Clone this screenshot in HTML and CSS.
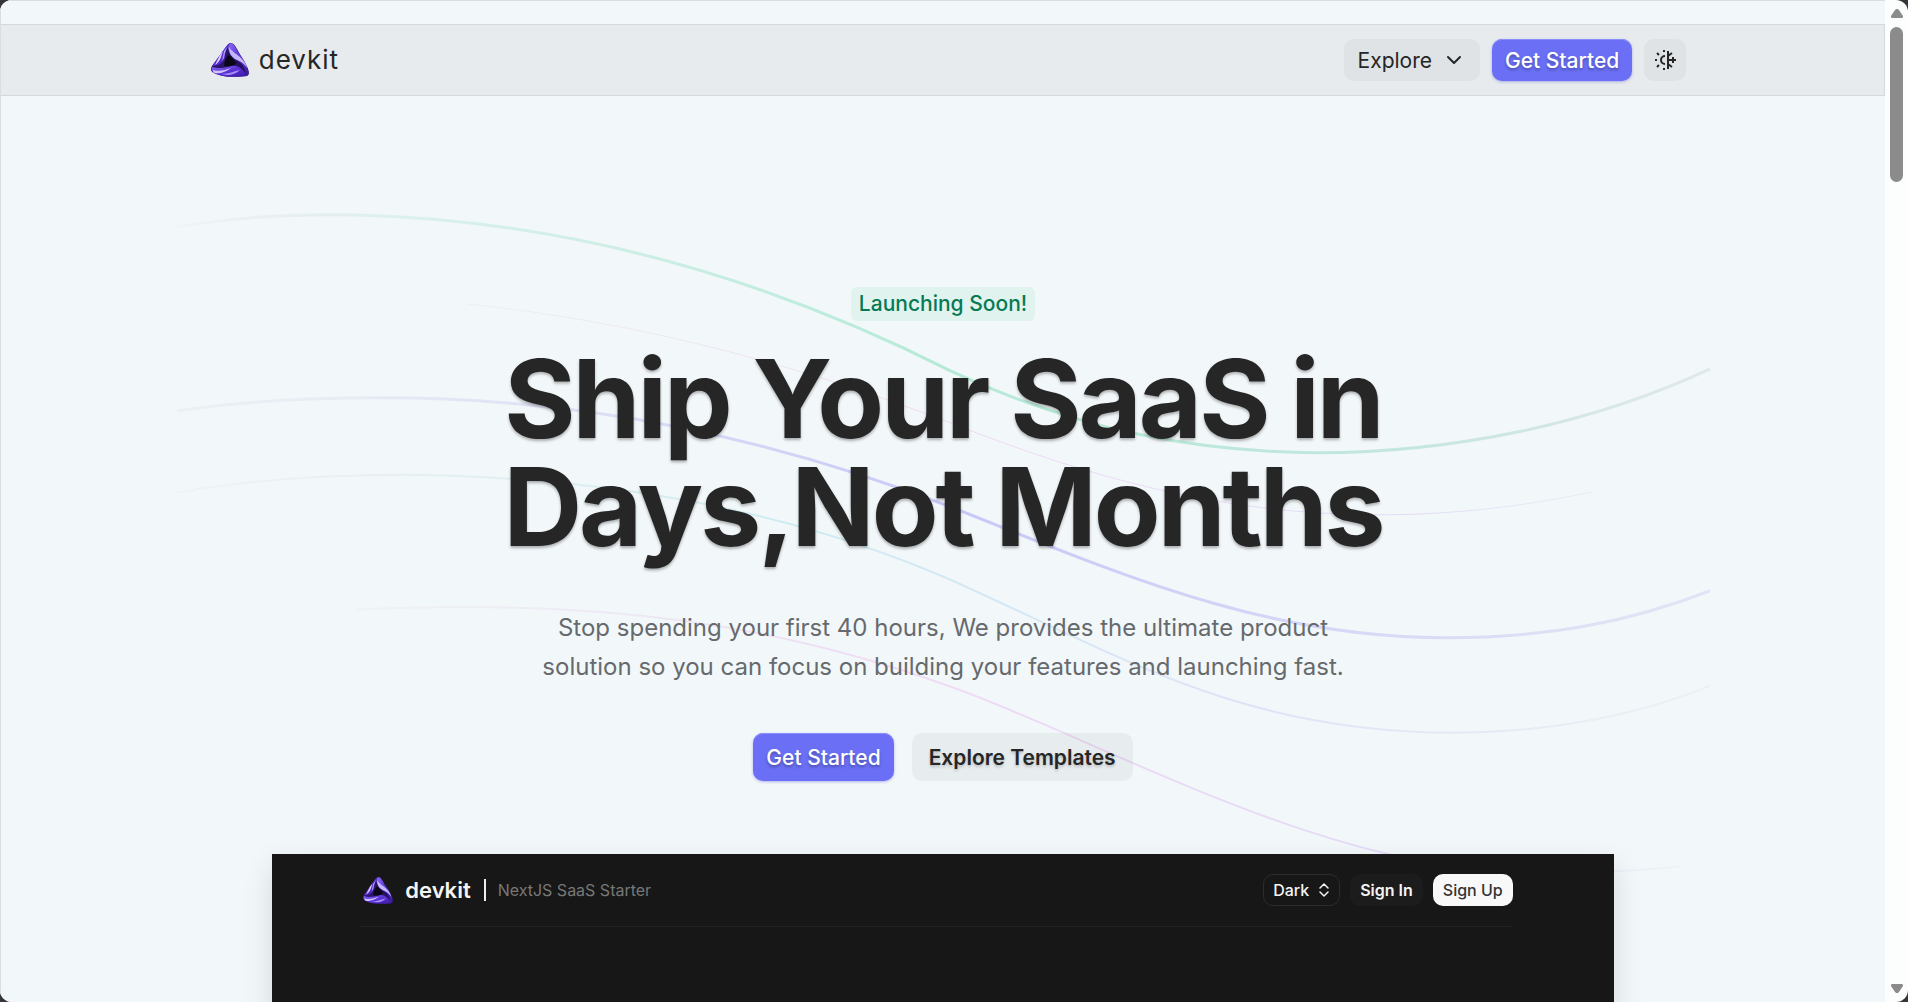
FILE: index.html
```html
<!DOCTYPE html>
<html lang="en">
<head>
    <meta charset="UTF-8">
    <meta name="viewport" content="width=device-width, initial-scale=1.0">
    <title>devkit</title>
    <link rel="stylesheet" href="styles.css">
</head>
<body>
    <svg class="defs" width="0" height="0" aria-hidden="true">
        <defs>
            <linearGradient id="purple" x1="0" y1="0" x2="1" y2="1">
                <stop offset="0" stop-color="#8a6df0"/>
                <stop offset="0.5" stop-color="#5a2fd8"/>
                <stop offset="1" stop-color="#3a1a9c"/>
            </linearGradient>
            <symbol id="logo" viewBox="0 0 38 34">
                <path fill="#2a1668" d="M20 0c2 0 4 2 6 6l10 18c2 4 3 8 0 9-8 1-24 2-33-3-3-1-4-4-2-7L15 4c2-3 3-4 5-4z"/>
                <path fill="url(#purple)" d="M20 0c3 1 5 5 7 9 4 5 7 9 10 17 1 4 0 6-2 7 0-8-5-12-10-15-4-3-7-8-8-13 1-3 1-5 3-5z"/>
                <path fill="#c3b5fa" d="M18 4c3 5 8 7 12 11 3 3 5 6 6 10-4-6-8-7-12-9-4-3-6-6-6-12z"/>
                <path fill="#24105e" d="M17 6c0 5 4 9 8 11 5 2 8 6 9 12-4-6-8-8-12-10-4-3-6-8-5-13z"/>
                <path fill="url(#purple)" d="M36 33c-8 1-24 2-33-3-2-1-3-4-2-6 6 2 13 1 19-1 7-1 12 3 16 10z"/>
                <path fill="#cfc4ff" d="M2 27c6 2 12 0 18-2-5 4-11 6-16 5-2 0-2-2-2-3z"/>
                <path fill="#a58cf7" d="M10 31c8 0 13-3 19-4-4 4-9 5-13 5z"/>
                <path fill="url(#purple)" d="M1 23 14 5c2-3 4-5 6-5-5 5-6 10-6 14-1 6-7 9-13 9z"/>
                <path fill="#d9d0ff" d="M12 8c-2 5-2 10-8 14l5-10z"/>
                <path fill="#b09af8" d="M18 2c-4 5-4 9-5 13l-2 3 2-10z"/>
                <path fill="#0b0716" d="M17 12c4 2 7 4 8 9-3 2-8 3-12 2 0-4 2-8 4-11z"/>
            </symbol>
        </defs>
    </svg>

    <div class="window">
        <div class="page">
            <header class="navbar">
                <nav class="container">
                    <a class="brand" href="#">
                        <svg class="brand-logo" aria-hidden="true"><use href="#logo"/></svg>
                        <span>devkit</span>
                    </a>
                    <div class="nav-actions">
                        <button type="button" class="btn btn-explore">
                            Explore
                            <svg width="16" height="16" viewBox="0 0 16 16" fill="none" stroke="currentColor" stroke-width="2" stroke-linecap="round" stroke-linejoin="round" aria-hidden="true"><path d="M2 5l6 6 6-6"/></svg>
                        </button>
                        <a class="btn btn-primary" href="#">Get Started</a>
                        <button type="button" class="btn btn-icon" aria-label="Toggle theme">
                            <svg width="22" height="22" viewBox="0 0 22 22" fill="none" stroke="currentColor" stroke-width="2" aria-hidden="true">
                                <path d="M11 7a4 4 0 0 0 0 8"/>
                                <path d="M10 1v2M10 19v2M1 11h2M3 4l2 2M3 18l2-2"/>
                                <path d="M14 2v18M14 11h8M19 8v6M14 7l4-3M14 15l4 3"/>
                            </svg>
                        </button>
                    </div>
                </nav>
            </header>

            <main class="hero">
                <!-- Background waves -->
                <svg class="waves" viewBox="0 0 1885 906" fill="none" aria-hidden="true">
                    <defs>
                        <linearGradient id="waveGreen" gradientUnits="userSpaceOnUse" x1="180" y1="0" x2="1710" y2="0">
                            <stop offset="0" stop-color="#d8dde0" stop-opacity="0.1"/>
                            <stop offset="0.15" stop-color="#d5efe8" stop-opacity="0.8"/>
                            <stop offset="0.5" stop-color="#b4ead6"/>
                            <stop offset="0.8" stop-color="#c3e6dd"/>
                            <stop offset="1" stop-color="#d8e2e2" stop-opacity="0.7"/>
                        </linearGradient>
                        <linearGradient id="waveIndigo" gradientUnits="userSpaceOnUse" x1="180" y1="0" x2="1710" y2="0">
                            <stop offset="0" stop-color="#dfe2ea" stop-opacity="0.3"/>
                            <stop offset="0.5" stop-color="#c6c7f8"/>
                            <stop offset="1" stop-color="#d8d8f2" stop-opacity="0.6"/>
                        </linearGradient>
                        <linearGradient id="waveTeal" gradientUnits="userSpaceOnUse" x1="180" y1="0" x2="1710" y2="0">
                            <stop offset="0" stop-color="#dfe4e8" stop-opacity="0.2"/>
                            <stop offset="0.4" stop-color="#cdecf0"/>
                            <stop offset="0.7" stop-color="#dfe2f7"/>
                            <stop offset="1" stop-color="#e4e6ee" stop-opacity="0.4"/>
                        </linearGradient>
                        <linearGradient id="wavePink" gradientUnits="userSpaceOnUse" x1="350" y1="0" x2="1680" y2="0">
                            <stop offset="0" stop-color="#e4e0ea" stop-opacity="0.2"/>
                            <stop offset="0.45" stop-color="#f0d9f4"/>
                            <stop offset="0.8" stop-color="#e2dcf8"/>
                            <stop offset="1" stop-color="#e2e2ec" stop-opacity="0.2"/>
                        </linearGradient>
                    </defs>
                    <g transform="translate(0 -96)">
                        <path stroke="url(#waveGreen)" stroke-width="3" d="M176 227C240 216 300 214 354 215C560 220 760 275 950 371C1080 432 1200 452 1317 453C1450 453 1590 425 1710 369"/>
                        <path stroke="url(#wavePink)" stroke-width="1" d="M466 304C640 322 800 366 950 423C1090 478 1220 515 1380 515C1460 515 1530 505 1593 492"/>
                        <path stroke="url(#waveIndigo)" stroke-width="3" d="M176 411C250 400 320 398 380 398C590 398 775 440 950 507C1110 570 1260 638 1445 638C1550 638 1630 622 1710 591"/>
                        <path stroke="url(#waveTeal)" stroke-width="2" d="M176 493C260 478 340 475 405 475C620 477 800 515 950 580C1120 656 1240 733 1455 733C1550 733 1640 715 1710 686"/>
                        <path stroke="url(#wavePink)" stroke-width="2" d="M354 610C600 598 780 625 950 687C1100 740 1320 870 1530 874C1590 874 1640 871 1680 867"/>
                    </g>
                </svg>

                <div class="hero-content">
                    <span class="badge">Launching Soon!</span>
                    <h1>Ship Your SaaS in<br>Days,Not Months</h1>
                    <p>Stop spending your first 40 hours, We provides the ultimate product solution so you can focus on building your features and launching fast.</p>
                    <div class="hero-actions">
                        <a class="btn btn-primary btn-lg" href="#">Get Started</a>
                        <a class="btn btn-secondary btn-lg" href="#">Explore Templates</a>
                    </div>
                </div>

                <!-- Product preview -->
                <section class="preview">
                    <div class="preview-bar">
                        <a class="preview-brand" href="#">
                            <svg class="preview-logo" aria-hidden="true"><use href="#logo"/></svg>
                            <span>devkit</span>
                        </a>
                        <span class="preview-title">NextJS SaaS Starter</span>
                        <div class="preview-actions">
                            <button type="button" class="preview-btn theme-select">
                                Dark
                                <svg width="12" height="16" viewBox="0 0 12 16" fill="none" stroke="currentColor" stroke-width="1.5" stroke-linecap="round" stroke-linejoin="round" aria-hidden="true"><path d="M2 6l4-4 4 4M2 10l4 4 4-4"/></svg>
                            </button>
                            <button type="button" class="preview-btn sign-in">Sign In</button>
                            <button type="button" class="preview-btn sign-up">Sign Up</button>
                        </div>
                    </div>
                </section>
            </main>
        </div>

        <!-- Scrollbar -->
        <div class="scrollbar" aria-hidden="true">
            <svg width="12" height="9" viewBox="0 0 12 9"><path fill="#8b8b8b" d="M6 0c1 0 1 0 2 1l4 6c0 1 0 2-1 2H1C0 9 0 8 0 7l4-6c1-1 1-1 2-1z"/></svg>
            <div class="thumb"></div>
            <svg width="12" height="9" viewBox="0 0 12 9"><path fill="#8b8b8b" d="M6 9c1 0 1 0 2-1l4-6c0-1 0-2-1-2H1C0 0 0 1 0 2l4 6c1 1 1 1 2 1z"/></svg>
        </div>
    </div>
</body>
</html>
```
FILE: styles.css
```css
* {
    box-sizing: border-box;
}

body {
    margin: 0;
    font-family: Inter, "Liberation Sans", sans-serif;
    color: #262626;
    background-color: #35353b;
}

a {
    color: inherit;
    text-decoration: none;
}

button {
    font: inherit;
    color: inherit;
    border: none;
    cursor: pointer;
}

.defs {
    position: absolute;
}

.window {
    display: flex;
    height: 100vh;
    overflow: hidden;
    border-radius: 12px;
    background-color: #fcfdfd;
}

.page {
    flex: 1;
    overflow: hidden;
    padding-top: 23px;
    background-color: #f2f7fa;
    border-top: 1px solid #d9dee1;
    border-left: 1px solid #d9dee1;
}

/* Navbar */
.navbar {
    background-color: #e7ebed;
    border: 1px solid #d3d8db;
    border-left: none;
}

.container {
    display: flex;
    align-items: center;
    justify-content: space-between;
    width: 79%;
    height: 70px;
    margin: 0 auto;
    padding-left: 12px;
}

.brand {
    display: flex;
    align-items: center;
    gap: 10px;
    font-size: 26px;
    line-height: 30px;
    letter-spacing: 1px;
}

.brand-logo {
    width: 38px;
    height: 34px;
}

.nav-actions {
    display: flex;
    gap: 12px;
}

.btn {
    display: flex;
    align-items: center;
    justify-content: center;
    height: 42px;
    padding: 0 13px;
    border-radius: 10px;
    font-size: 21px;
    font-weight: 500;
    white-space: nowrap;
}

.btn-explore {
    gap: 14px;
    background-color: #dfe3e5;
    padding: 0 18px 0 14px;
    font-weight: 400;
}

.btn-primary {
    color: #fff;
    background-color: #6a6ff5;
    box-shadow: inset 0 1px 0 #8c90fa, 0 1px 3px rgba(80, 80, 220, 0.4);
    text-shadow: 0 2px 3px rgba(0, 0, 0, 0.3);
}

.btn-icon {
    width: 42px;
    padding: 0;
    background-color: #dfe3e5;
}

.btn-secondary {
    background-color: rgba(38, 38, 38, 0.05);
    padding: 0 17px;
    font-weight: 600;
    text-shadow: 0 2px 3px rgba(0, 0, 0, 0.2);
}

.btn-lg {
    height: 48px;
}

/* Hero */
.hero {
    position: relative;
    padding-top: 191px;
}

.waves {
    position: absolute;
    top: 0;
    left: 0;
    width: 100%;
}

.hero-content {
    position: relative;
    display: flex;
    flex-direction: column;
    align-items: center;
    text-align: center;
}

.badge {
    padding: 4px 8px;
    border-radius: 6px;
    font-size: 21px;
    line-height: 26px;
    font-weight: 500;
    color: #067a55;
    background-color: #e0f3ee;
}

h1 {
    margin: 23px 0 0;
    font-size: 109px;
    line-height: 108px;
    font-weight: 700;
    letter-spacing: -3px;
    text-shadow: 0 2px 3px rgba(0, 0, 0, 0.3);
}

.hero-content p {
    max-width: 820px;
    margin: 48px 0 0;
    font-size: 24px;
    line-height: 39px;
    color: #666a6c;
}

.hero-actions {
    display: flex;
    gap: 18px;
    margin-top: 47px;
}

/* Product preview */
.preview {
    position: relative;
    width: 71.2%;
    height: 700px;
    margin: 73px auto 0;
    padding: 0 101px 0 87px;
    background-color: #171717;
    box-shadow: 0 12px 28px rgba(0, 0, 0, 0.12);
}

.preview-bar {
    display: flex;
    align-items: center;
    height: 73px;
    padding-left: 4px;
    border-bottom: 1px solid #222;
    color: #f4f4f4;
}

.preview-brand {
    display: flex;
    align-items: center;
    gap: 12px;
    font-size: 22px;
    font-weight: 600;
}

.preview-logo {
    width: 30px;
    height: 27px;
}

.preview-title {
    margin-left: 13px;
    padding-left: 12px;
    border-left: 2px solid #eee;
    font-size: 16px;
    line-height: 22px;
    color: #777;
}

.preview-actions {
    display: flex;
    gap: 10px;
    margin-left: auto;
}

.preview-btn {
    display: flex;
    align-items: center;
    height: 32px;
    padding: 0 10px;
    border-radius: 10px;
    font-size: 16px;
    font-weight: 600;
    background-color: #1c1c1c;
}

.theme-select {
    gap: 9px;
    padding: 0 9px;
    font-weight: 500;
    background-color: #171717;
    border: 1px solid #2c2c2c;
}

.sign-up {
    color: #333;
    font-weight: 500;
    background-color: #f8f8f8;
}

/* Scrollbar */
.scrollbar {
    display: flex;
    flex-direction: column;
    align-items: center;
    width: 23px;
    padding: 9px 0;
}

.thumb {
    width: 13px;
    height: 155px;
    margin: 9px 0 auto;
    border-radius: 7px;
    background-color: #8b8b8b;
}
```
